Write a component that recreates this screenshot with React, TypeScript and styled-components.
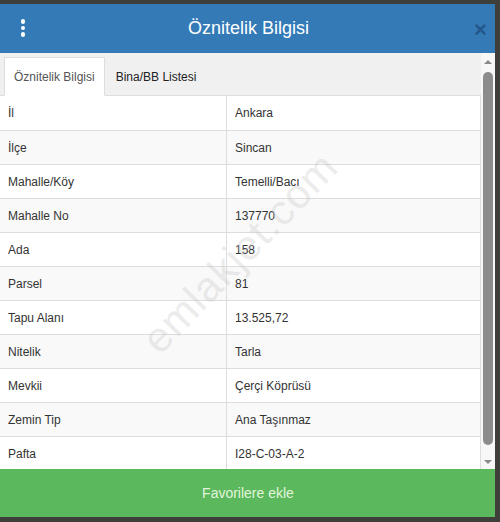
import React from "react";
import styled, { createGlobalStyle } from "styled-components";

const Global = createGlobalStyle`
  html, body { margin: 0; padding: 0; }
  *, *::before, *::after { box-sizing: border-box; }
  body {
    background: #3e3f3a;
    font-family: "Liberation Sans", Arial, sans-serif;
    width: 500px;
    height: 522px;
    overflow: hidden;
  }
`;

const Modal = styled.div`
  margin-top: 4px;
  width: 495px;
  height: 513px;
  display: flex;
  flex-direction: column;
  background: #fff;
`;

const Header = styled.div`
  height: 49px;
  flex: none;
  background: #337ab7;
  display: grid;
  grid-template-columns: 46px 1fr 46px;
  align-items: center;
`;

const Kebab = styled.div`
  display: flex;
  flex-direction: column;
  align-items: center;
  gap: 2px;
  padding-bottom: 1px;
`;

const Dot = styled.span`
  width: 4.5px;
  height: 4.5px;
  border-radius: 50%;
  background: #fff;
`;

const Title = styled.h4`
  margin: 0;
  text-align: center;
  color: #fff;
  font-size: 18px;
  font-weight: 400;
  padding-left: 2px;
`;

const Close = styled.span`
  text-align: center;
  color: #24578a;
  font-size: 22px;
  font-weight: 700;
  line-height: 1;
  padding-left: 17px;
  padding-top: 2px;
`;

const Body = styled.div`
  flex: 1;
  display: flex;
  min-height: 0;
`;

const Content = styled.div`
  flex: 1;
  overflow: hidden;
  position: relative;
  display: flex;
  flex-direction: column;
`;

const Tabs = styled.ul`
  margin: 0;
  padding: 4px 0 0 4px;
  list-style: none;
  display: flex;
  flex: none;
  background: #f0f0f0;
  border-bottom: 1px solid #ddd;
  height: 43px;
`;

const Tab = styled.li<{ $active?: boolean }>`
  padding: 0 9px;
  display: flex;
  align-items: center;
  font-size: 12px;
  color: ${(p) => (p.$active ? "#555" : "#222")};
  background: ${(p) => (p.$active ? "#fff" : "transparent")};
  border: 1px solid ${(p) => (p.$active ? "#ddd" : "transparent")};
  border-bottom-color: transparent;
  margin-bottom: -1px;
  margin-right: 1px;
`;

const Table = styled.div`
  display: flex;
  flex-direction: column;
  flex: none;
  border-right: 1px solid #ddd;
`;

const Row = styled.div<{ $striped?: boolean }>`
  display: grid;
  grid-template-columns: 226px 1fr;
  height: 34px;
  flex: none;
  border-top: 1px solid #ddd;
  background: ${(p) => (p.$striped ? "#f9f9f9" : "#fff")};
  &:first-child { border-top: none; }
`;

const Cell = styled.div<{ $value?: boolean }>`
  display: flex;
  align-items: center;
  padding-left: 8px;
  font-size: 12px;
  color: #333;
  border-left: ${(p) => (p.$value ? "1px solid #ddd" : "none")};
`;

const Watermark = styled.div`
  position: absolute;
  left: 240px;
  top: 200px;
  transform: translate(-50%, -50%) rotate(-46deg);
  font-size: 42px;
  color: rgba(190, 190, 190, 0.3);
  white-space: nowrap;
  pointer-events: none;
  letter-spacing: 1px;
`;

const ScrollBar = styled.div`
  width: 14px;
  flex: none;
  background: #f7f7f7;
  display: flex;
  flex-direction: column;
  align-items: center;
  padding: 7px 0 5px;
`;

const Arrow = styled.div<{ $down?: boolean }>`
  width: 0;
  height: 0;
  border-left: 4px solid transparent;
  border-right: 4px solid transparent;
  ${(p) =>
    p.$down
      ? "border-top: 4px solid #8a8a8a;"
      : "border-bottom: 4px solid #8a8a8a;"}
`;

const Track = styled.div`
  flex: 1;
  width: 100%;
  display: flex;
  justify-content: center;
  padding: 8px 0 10px;
`;

const Thumb = styled.div`
  width: 10px;
  height: 373px;
  border-radius: 5px;
  background: #8c8c8c;
`;

const Footer = styled.button`
  flex: none;
  height: 48px;
  border: none;
  margin: 0;
  background: #5cb85c;
  color: #e2f5dc;
  font-family: "Liberation Sans", Arial, sans-serif;
  font-size: 14px;
  text-align: center;
  padding: 0 0 0 1px;
  cursor: pointer;
`;

const rows: [string, string][] = [
  ["İl", "Ankara"],
  ["İlçe", "Sincan"],
  ["Mahalle/Köy", "Temelli/Bacı"],
  ["Mahalle No", "137770"],
  ["Ada", "158"],
  ["Parsel", "81"],
  ["Tapu Alanı", "13.525,72"],
  ["Nitelik", "Tarla"],
  ["Mevkii", "Çerçi Köprüsü"],
  ["Zemin Tip", "Ana Taşınmaz"],
  ["Pafta", "I28-C-03-A-2"],
];

export default function App() {
  return (
    <>
      <Global />
      <Modal>
        <Header>
          <Kebab>
            <Dot />
            <Dot />
            <Dot />
          </Kebab>
          <Title>Öznitelik Bilgisi</Title>
          <Close>×</Close>
        </Header>
        <Body>
          <Content>
            <Tabs>
              <Tab $active>Öznitelik Bilgisi</Tab>
              <Tab>Bina/BB Listesi</Tab>
            </Tabs>
            <Table>
              {rows.map(([k, v], i) => (
                <Row key={k} $striped={i % 2 === 1}>
                  <Cell>{k}</Cell>
                  <Cell $value>{v}</Cell>
                </Row>
              ))}
            </Table>
            <Watermark>emlakjet.com</Watermark>
          </Content>
          <ScrollBar>
            <Arrow />
            <Track>
              <Thumb />
            </Track>
            <Arrow $down />
          </ScrollBar>
        </Body>
        <Footer>Favorilere ekle</Footer>
      </Modal>
    </>
  );
}
